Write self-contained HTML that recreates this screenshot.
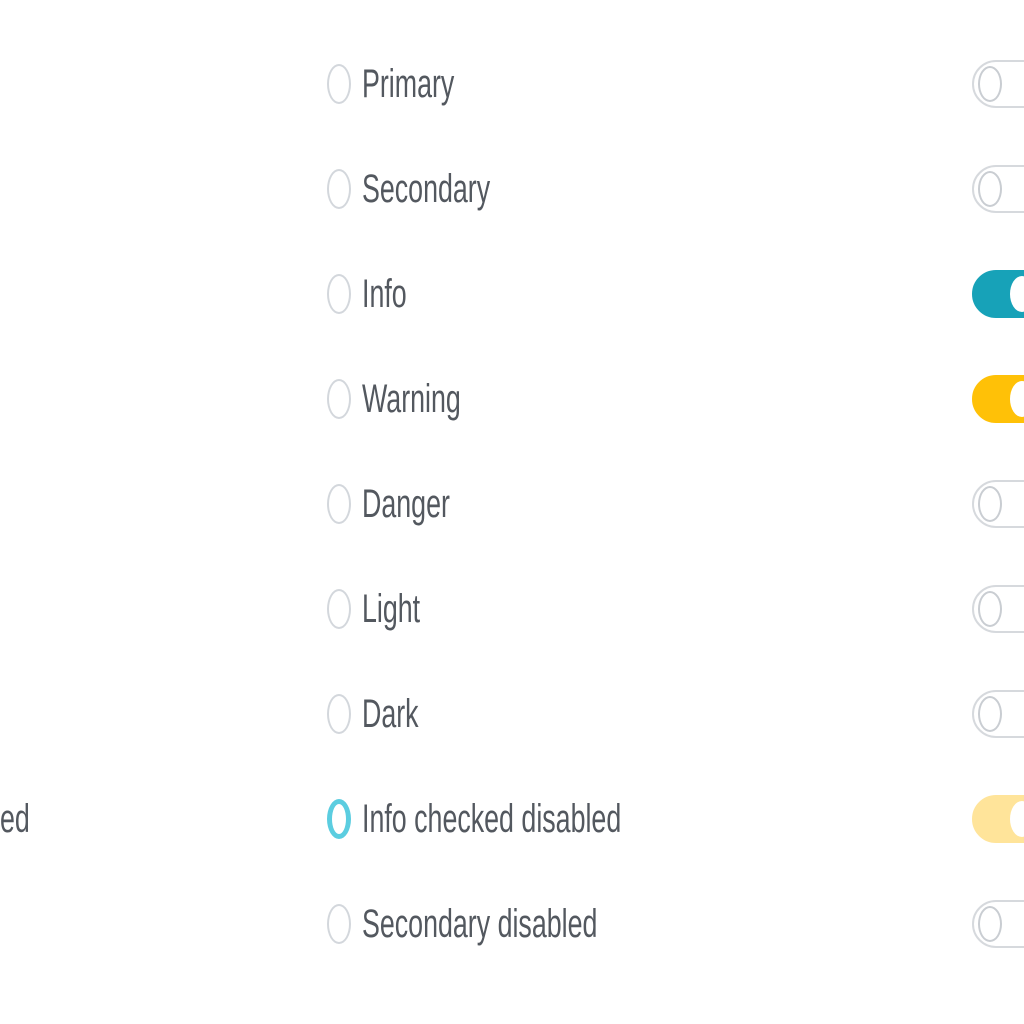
<!DOCTYPE html><html><head><style>
body{margin:0;width:1024px;height:1024px;background:#fff;overflow:hidden;position:relative;font-family:"Liberation Sans",sans-serif}
.r{position:absolute;left:327px;height:50px}
.c{position:absolute;left:0;top:4px;width:24px;height:40px;border:2px solid #d3d7dc;border-radius:50%;box-sizing:border-box}
.t{position:absolute;left:35px;top:0;font-size:40px;line-height:48px;color:#53585f;transform:scaleX(0.67);transform-origin:0 0;white-space:nowrap}
.s{position:absolute;left:972px;width:90px;height:48px;border:2px solid #d6d9dd;border-radius:24px;box-sizing:border-box;background:#fff}
.s::after{content:"";position:absolute;left:4px;top:4px;width:24px;height:36px;border-radius:50%;border:2px solid #c9cdd2;box-sizing:border-box}
.on::after{left:36px;background:#fff;border:none}
</style></head><body>
<div class="r" style="top:60px"><div class="c"></div><div class="t">Primary</div></div>
<div class="r" style="top:165px"><div class="c"></div><div class="t">Secondary</div></div>
<div class="r" style="top:270px"><div class="c"></div><div class="t">Info</div></div>
<div class="r" style="top:375px"><div class="c"></div><div class="t">Warning</div></div>
<div class="r" style="top:480px"><div class="c"></div><div class="t">Danger</div></div>
<div class="r" style="top:585px"><div class="c"></div><div class="t">Light</div></div>
<div class="r" style="top:690px"><div class="c"></div><div class="t">Dark</div></div>
<div class="r" style="top:795px"><div class="c" style="border:5px solid #5bcde0"></div><div class="t">Info checked disabled</div></div>
<div class="r" style="top:900px"><div class="c"></div><div class="t">Secondary disabled</div></div>
<div class="t" style="position:absolute;left:0;top:795px">ed</div>
<div class="s" style="top:60px"></div>
<div class="s" style="top:165px"></div>
<div class="s on" style="top:270px;background:#17a2b8;border-color:#17a2b8"></div>
<div class="s on" style="top:375px;background:#ffc107;border-color:#ffc107"></div>
<div class="s" style="top:480px"></div>
<div class="s" style="top:585px"></div>
<div class="s" style="top:690px"></div>
<div class="s on" style="top:795px;background:#ffe49a;border-color:#ffe49a"></div>
<div class="s" style="top:900px"></div>
</body></html>
